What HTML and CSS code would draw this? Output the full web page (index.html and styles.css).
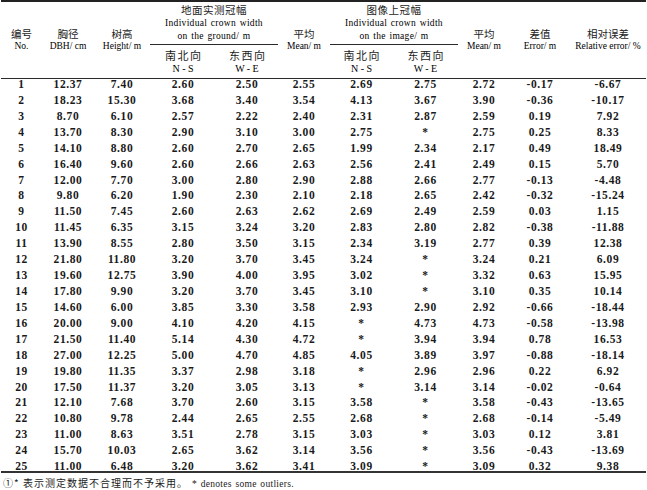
FILE: index.html
```html
<!DOCTYPE html>
<html lang="zh">
<head>
<meta charset="utf-8">
<title>冠幅测量对比</title>
<link rel="stylesheet" href="styles.css">
</head>
<body>
<div class="sheet">
<table class="tbl">
<colgroup>
<col class="c1"><col class="c2"><col class="c3"><col class="c4"><col class="c5"><col class="c6"><col class="c7"><col class="c8"><col class="c9"><col class="c10"><col class="c11">
</colgroup>
<thead>
<tr>
<th class="span" rowspan="2"><div class="zh">编号</div><div class="en">No.</div></th>
<th class="span" rowspan="2"><div class="zh">胸径</div><div class="en">DBH/ cm</div></th>
<th class="span" rowspan="2"><div class="zh">树高</div><div class="en">Height/ m</div></th>
<th class="group" colspan="2"><div class="zh zh-top">地面实测冠幅</div><div class="en en-g">Individual crown width</div><div class="en en-g">on the ground/ m</div></th>
<th class="span" rowspan="2"><div class="zh">平均</div><div class="en">Mean/ m</div></th>
<th class="group" colspan="2"><div class="zh zh-top">图像上冠幅</div><div class="en en-g">Individual crown width</div><div class="en en-g">on the image/ m</div></th>
<th class="span" rowspan="2"><div class="zh">平均</div><div class="en">Mean/ m</div></th>
<th class="span" rowspan="2"><div class="zh">差值</div><div class="en">Error/ m</div></th>
<th class="span" rowspan="2"><div class="zh">相对误差</div><div class="en">Relative error/ %</div></th>
</tr>
<tr>
<th class="sub"><div class="zh zh-sub">南北向</div><div class="en en-dir">N-S</div></th>
<th class="sub"><div class="zh zh-sub">东西向</div><div class="en en-dir">W-E</div></th>
<th class="sub"><div class="zh zh-sub">南北向</div><div class="en en-dir">N-S</div></th>
<th class="sub"><div class="zh zh-sub">东西向</div><div class="en en-dir">W-E</div></th>
</tr>
</thead>
<tbody>
<tr><td>1</td><td>12.37</td><td>7.40</td><td>2.60</td><td>2.50</td><td>2.55</td><td>2.69</td><td>2.75</td><td>2.72</td><td>-0.17</td><td>-6.67</td></tr>
<tr><td>2</td><td>18.23</td><td>15.30</td><td>3.68</td><td>3.40</td><td>3.54</td><td>4.13</td><td>3.67</td><td>3.90</td><td>-0.36</td><td>-10.17</td></tr>
<tr><td>3</td><td>8.70</td><td>6.10</td><td>2.57</td><td>2.22</td><td>2.40</td><td>2.31</td><td>2.87</td><td>2.59</td><td>0.19</td><td>7.92</td></tr>
<tr><td>4</td><td>13.70</td><td>8.30</td><td>2.90</td><td>3.10</td><td>3.00</td><td>2.75</td><td>*</td><td>2.75</td><td>0.25</td><td>8.33</td></tr>
<tr><td>5</td><td>14.10</td><td>8.80</td><td>2.60</td><td>2.70</td><td>2.65</td><td>1.99</td><td>2.34</td><td>2.17</td><td>0.49</td><td>18.49</td></tr>
<tr><td>6</td><td>16.40</td><td>9.60</td><td>2.60</td><td>2.66</td><td>2.63</td><td>2.56</td><td>2.41</td><td>2.49</td><td>0.15</td><td>5.70</td></tr>
<tr><td>7</td><td>12.00</td><td>7.70</td><td>3.00</td><td>2.80</td><td>2.90</td><td>2.88</td><td>2.66</td><td>2.77</td><td>-0.13</td><td>-4.48</td></tr>
<tr><td>8</td><td>9.80</td><td>6.20</td><td>1.90</td><td>2.30</td><td>2.10</td><td>2.18</td><td>2.65</td><td>2.42</td><td>-0.32</td><td>-15.24</td></tr>
<tr><td>9</td><td>11.50</td><td>7.45</td><td>2.60</td><td>2.63</td><td>2.62</td><td>2.69</td><td>2.49</td><td>2.59</td><td>0.03</td><td>1.15</td></tr>
<tr><td>10</td><td>11.45</td><td>6.35</td><td>3.15</td><td>3.24</td><td>3.20</td><td>2.83</td><td>2.80</td><td>2.82</td><td>-0.38</td><td>-11.88</td></tr>
<tr><td>11</td><td>13.90</td><td>8.55</td><td>2.80</td><td>3.50</td><td>3.15</td><td>2.34</td><td>3.19</td><td>2.77</td><td>0.39</td><td>12.38</td></tr>
<tr><td>12</td><td>21.80</td><td>11.80</td><td>3.20</td><td>3.70</td><td>3.45</td><td>3.24</td><td>*</td><td>3.24</td><td>0.21</td><td>6.09</td></tr>
<tr><td>13</td><td>19.60</td><td>12.75</td><td>3.90</td><td>4.00</td><td>3.95</td><td>3.02</td><td>*</td><td>3.32</td><td>0.63</td><td>15.95</td></tr>
<tr><td>14</td><td>17.80</td><td>9.90</td><td>3.20</td><td>3.70</td><td>3.45</td><td>3.10</td><td>*</td><td>3.10</td><td>0.35</td><td>10.14</td></tr>
<tr><td>15</td><td>14.60</td><td>6.00</td><td>3.85</td><td>3.30</td><td>3.58</td><td>2.93</td><td>2.90</td><td>2.92</td><td>-0.66</td><td>-18.44</td></tr>
<tr><td>16</td><td>20.00</td><td>9.00</td><td>4.10</td><td>4.20</td><td>4.15</td><td>*</td><td>4.73</td><td>4.73</td><td>-0.58</td><td>-13.98</td></tr>
<tr><td>17</td><td>21.50</td><td>11.40</td><td>5.14</td><td>4.30</td><td>4.72</td><td>*</td><td>3.94</td><td>3.94</td><td>0.78</td><td>16.53</td></tr>
<tr><td>18</td><td>27.00</td><td>12.25</td><td>5.00</td><td>4.70</td><td>4.85</td><td>4.05</td><td>3.89</td><td>3.97</td><td>-0.88</td><td>-18.14</td></tr>
<tr><td>19</td><td>19.80</td><td>11.35</td><td>3.37</td><td>2.98</td><td>3.18</td><td>*</td><td>2.96</td><td>2.96</td><td>0.22</td><td>6.92</td></tr>
<tr><td>20</td><td>17.50</td><td>11.37</td><td>3.20</td><td>3.05</td><td>3.13</td><td>*</td><td>3.14</td><td>3.14</td><td>-0.02</td><td>-0.64</td></tr>
<tr><td>21</td><td>12.10</td><td>7.68</td><td>3.70</td><td>2.60</td><td>3.15</td><td>3.58</td><td>*</td><td>3.58</td><td>-0.43</td><td>-13.65</td></tr>
<tr><td>22</td><td>10.80</td><td>9.78</td><td>2.44</td><td>2.65</td><td>2.55</td><td>2.68</td><td>*</td><td>2.68</td><td>-0.14</td><td>-5.49</td></tr>
<tr><td>23</td><td>11.00</td><td>8.63</td><td>3.51</td><td>2.78</td><td>3.15</td><td>3.03</td><td>*</td><td>3.03</td><td>0.12</td><td>3.81</td></tr>
<tr><td>24</td><td>15.70</td><td>10.03</td><td>2.65</td><td>3.62</td><td>3.14</td><td>3.56</td><td>*</td><td>3.56</td><td>-0.43</td><td>-13.69</td></tr>
<tr class="last"><td>25</td><td>11.00</td><td>6.48</td><td>3.20</td><td>3.62</td><td>3.41</td><td>3.09</td><td>*</td><td>3.09</td><td>0.32</td><td>9.38</td></tr>
</tbody>
</table>
<p class="note"><span class="note-zh">①* 表示测定数据不合理而不予采用。</span><span class="note-en">* denotes some outliers.</span></p>
</div>
</body>
</html>
```

FILE: styles.css
```css
html, body {
  margin: 0;
  padding: 0;
  background: #ffffff;
}

body {
  color: #111111;
  font-family: "Liberation Serif", "Noto Sans CJK SC", serif;
}

.sheet {
  width: 645px;
  margin-left: 1px;
}

.tbl {
  width: 645px;
  table-layout: fixed;
  border-collapse: separate;
  border-spacing: 0;
  border-top: 2px solid #222222;
  border-bottom: 2px solid #333333;
}

.c1 { width: 41px; }
.c2 { width: 52px; }
.c3 { width: 56px; }
.c4 { width: 66px; }
.c5 { width: 62px; }
.c6 { width: 52px; }
.c7 { width: 63px; }
.c8 { width: 65px; }
.c9 { width: 52px; }
.c10 { width: 60px; }
.c11 { width: 76px; }

th {
  padding: 0;
  font-weight: normal;
  text-align: center;
  white-space: nowrap;
}

.zh {
  font-family: "Noto Sans CJK SC", sans-serif;
  font-size: 10.5px;
  line-height: 12px;
  color: #1a1a1a;
}

.en {
  font-family: "Liberation Serif", serif;
  font-size: 9.5px;
  line-height: 12px;
  color: #000000;
}

.span {
  vertical-align: middle;
  border-bottom: 1px solid #2a2a2a;
}

.group {
  height: 41px;
  vertical-align: top;
  padding-top: 1px;
  border-bottom: 1px solid #2a2a2a;
}

.zh-top {
  line-height: 14px;
  letter-spacing: 0.5px;
}

.en-g {
  line-height: 13px;
  letter-spacing: 0.3px;
  word-spacing: 1px;
}

.sub {
  vertical-align: top;
  padding: 3px 0 3px;
  border-bottom: 1px solid #2a2a2a;
}

.zh-sub {
  font-size: 11px;
  line-height: 14px;
  letter-spacing: 1.5px;
  padding-left: 1.5px;
}

.en-dir {
  font-size: 10px;
  line-height: 13px;
  letter-spacing: 2.5px;
  padding-left: 2.5px;
}

tbody td {
  padding: 2px 0 7.73px;
  font-size: 11.5px;
  font-weight: bold;
  line-height: 6.2px;
  text-align: center;
  white-space: nowrap;
  letter-spacing: 0.6px;
  color: #1a1a1a;
}

tbody tr.last td {
  padding-bottom: 1.5px;
}

.note {
  margin: 4px 0 0;
  padding-left: 2px;
  font-size: 9.5px;
  line-height: 12px;
  color: #1a1a1a;
  white-space: nowrap;
}

.note-zh {
  font-family: "Noto Sans CJK SC", sans-serif;
  letter-spacing: 1px;
  font-size: 10px;
}

.note-en {
  font-family: "Liberation Serif", serif;
  letter-spacing: 0.3px;
  word-spacing: 1px;
  margin-left: 4px;
}
```
